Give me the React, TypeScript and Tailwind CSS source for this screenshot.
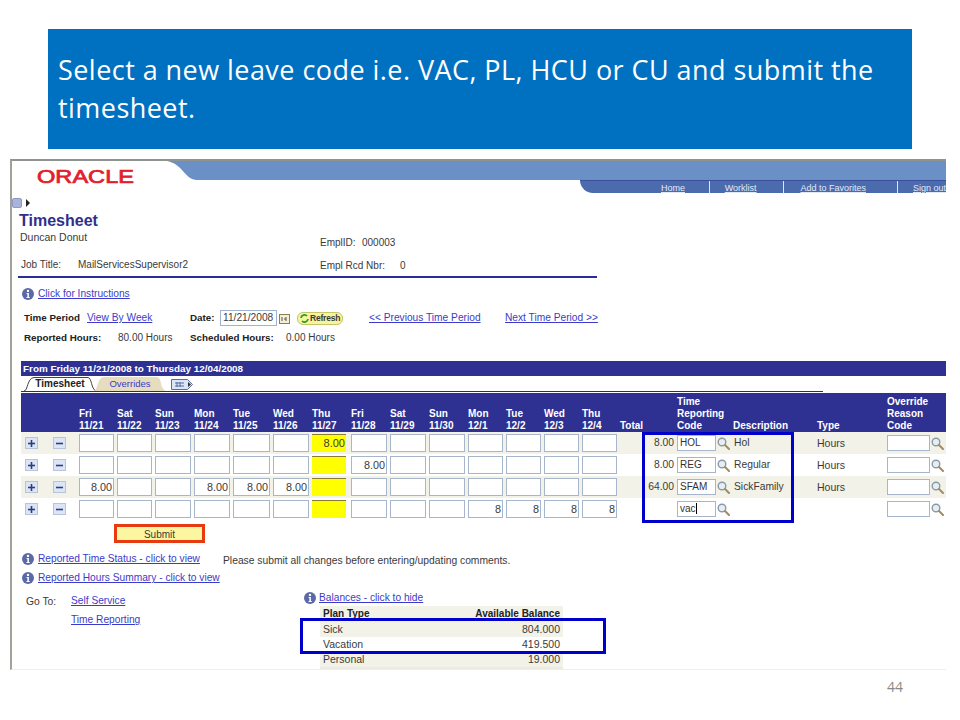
import React from "react";

const gridCols =
  "grid grid-cols-[28px_30px_38px_38px_39px_39px_40px_39px_39px_39px_39px_39px_38px_38px_38px_38px_57px_56px_84px_70px_59px]";

const days = [
  ["Fri", "11/21"], ["Sat", "11/22"], ["Sun", "11/23"], ["Mon", "11/24"], ["Tue", "11/25"], ["Wed", "11/26"], ["Thu", "11/27"],
  ["Fri", "11/28"], ["Sat", "11/29"], ["Sun", "11/30"], ["Mon", "12/1"], ["Tue", "12/2"], ["Wed", "12/3"], ["Thu", "12/4"],
];

const rows = [
  { vals: { 6: "8.00" } as Record<number, string>, total: "8.00", code: "HOL", desc: "Hol", type: "Hours" },
  { vals: { 7: "8.00" } as Record<number, string>, total: "8.00", code: "REG", desc: "Regular", type: "Hours" },
  { vals: { 0: "8.00", 3: "8.00", 4: "8.00", 5: "8.00" } as Record<number, string>, total: "64.00", code: "SFAM", desc: "SickFamily", type: "Hours" },
  { vals: { 10: "8", 11: "8", 12: "8", 13: "8" } as Record<number, string>, total: "", code: "vac", desc: "", type: "" },
];

function Info() {
  return (
    <svg width="12" height="12" viewBox="0 0 12 12" className="shrink-0">
      <circle cx="6" cy="6" r="6" fill="#5b6aa6" />
      <circle cx="6" cy="2.9" r="1.2" fill="#fff" />
      <path d="M4.6 5h2.3v4h.8v1H4.5V9h.9V6h-.8z" fill="#fff" />
    </svg>
  );
}

function Glass() {
  return (
    <svg width="13" height="13" viewBox="0 0 13 13" className="shrink-0">
      <circle cx="5" cy="5" r="3.8" fill="#e6eef5" stroke="#8b9aa8" strokeWidth="1.4" />
      <path d="M8 8l4 4" stroke="#a08c60" strokeWidth="2" strokeLinecap="round" />
    </svg>
  );
}

function Box({ plus }: { plus?: boolean }) {
  return (
    <div className="w-[13px] h-[12px] bg-[#dbe5f5] border border-[#b8c4da] flex items-center justify-center">
      <svg width="9" height="9" viewBox="0 0 9 9">
        <path d="M1 4.5h7" stroke="#2e3d80" strokeWidth="1.6" />
        {plus && <path d="M4.5 1v7" stroke="#2e3d80" strokeWidth="1.6" />}
      </svg>
    </div>
  );
}

function Link({ children, className = "" }: { children: React.ReactNode; className?: string }) {
  return <span className={"text-[#3b3bc9] underline text-[10.2px] leading-[14px] whitespace-nowrap " + className}>{children}</span>;
}

export default function App() {
  return (
    <div className="w-[960px] h-[720px] bg-white overflow-hidden font-['Liberation_Sans',Arial,sans-serif] text-[#3a3a3a] text-[10.5px] leading-[14px]">
      <div className="pt-[29px] pl-[48px]">
        <div className="w-[864px] h-[120px] bg-[#0070c0] pt-[22px] pl-[10px] pr-[20px] text-white font-['Open_Sans',sans-serif] text-[27px] tracking-[0.45px] leading-[38px]">
          Select a new leave code i.e. VAC, PL, HCU or CU and submit the timesheet.
        </div>
      </div>

      <div className="relative ml-[10px] mt-[10px] w-[936px] h-[511px] overflow-hidden border-l-2 border-t-2 border-b border-l-[#a2a29a] border-t-[#8f9490] border-b-[#eeeeee]">
        {/* header */}
        <div className="flex h-[32px]">
          <div className="w-[155px] pl-[25px] pt-[7px]">
            <svg width="98" height="18" viewBox="0 0 98 18" className="overflow-visible">
              <text x="0" y="14.5" textLength="97" lengthAdjust="spacingAndGlyphs" fontFamily="Liberation Sans, Arial, sans-serif" fontWeight="400" fontSize="17.5" fill="#e2202c" stroke="#e2202c" strokeWidth="0.7">
                ORACLE
              </text>
            </svg>
          </div>
          <svg width="30" height="19" viewBox="0 0 30 19" className="shrink-0">
            <path d="M0 0H30V19C18 19 16 3 0 0Z" fill="#6b90c6" />
          </svg>
          <div className="flex-1 flex flex-col">
            <div className="h-[19px] bg-[#6b90c6]" />
            <div className="flex justify-end">
              <div className="w-[366px] h-[13px] bg-[#4a6bae] border-t border-t-[#3c4f9a] rounded-bl-[18px] flex text-[#e3e9f4] text-[9px] leading-[15px] underline whitespace-nowrap">
                <div className="w-[130px] pl-[81px] border-r border-r-[#dfe6f2]">Home</div>
                <div className="w-[75px] pl-[15px] border-r border-r-[#dfe6f2]">Worklist</div>
                <div className="w-[114px] pl-[16px] border-r border-r-[#dfe6f2]">Add to Favorites</div>
                <div className="pl-[15px]">Sign out</div>
              </div>
            </div>
          </div>
        </div>

        {/* menu toggle */}
        <div className="mt-[4px] h-[12px] flex items-center">
          <div className="w-[10px] h-[10px] rounded-[2px] bg-[#a9b4dc] border border-[#8e9ac6]" />
          <svg width="6" height="8" viewBox="0 0 6 8" className="ml-[3px]">
            <path d="M1 0l4 4-4 4z" fill="#222" />
          </svg>
        </div>

        <div className="mt-[3px] ml-[7px] h-[18px] text-[16px] leading-[18px] font-bold text-[#2f2f8c]">Timesheet</div>

        {/* identity */}
        <div className="flex h-[46px]">
          <div className="w-[308px] pl-[8px]">
            <div className="h-[14px]">Duncan Donut</div>
            <div className="mt-[14px] flex h-[14px]">
              <div className="w-[58px] pl-[1px] text-[10px]">Job Title:</div>
              <div className="text-[10px]">MailServicesSupervisor2</div>
            </div>
          </div>
          <div className="pt-[6px] text-[10px]">
            <div className="flex h-[14px]">
              <div className="w-[42px]">EmplID:</div>
              <div>000003</div>
            </div>
            <div className="mt-[9px] flex h-[14px]">
              <div className="w-[80px]">Empl Rcd Nbr:</div>
              <div>0</div>
            </div>
          </div>
        </div>
        <div className="ml-[6px] w-[579px] h-[2px] bg-[#2b2b9a]" />

        <div className="mt-[9px] ml-[10px] h-[14px] flex items-center gap-[4px]">
          <Info />
          <Link>Click for Instructions</Link>
        </div>

        {/* time period */}
        <div className="mt-[10px] ml-[12px] h-[14px] flex items-center text-[9.8px]">
          <div className="w-[63px] font-bold text-[#222]">Time Period</div>
          <Link className="w-[103px]">View By Week</Link>
          <div className="w-[30px] font-bold text-[#222]">Date:</div>
          <div className="w-[57px] h-[16px] border border-[#9fb3cf] text-[10.2px] leading-[14px] pl-[2px]">11/21/2008</div>
          <svg width="11" height="11" viewBox="0 0 11 11" className="ml-[2px]">
            <rect x="0.5" y="1.5" width="10" height="9" fill="#f4f0d8" stroke="#8a7d50" />
            <path d="M3 4v4M7 4v4M5 6h2" stroke="#555" />
          </svg>
          <div className="ml-[7px] w-[46px] h-[13px] rounded-[6px] bg-[#f6f59a] border border-[#c5c466] flex items-center pl-[2px] gap-[1px] text-[8.5px] font-bold tracking-[-0.2px]">
            <svg width="9" height="9" viewBox="0 0 9 9" className="shrink-0">
              <path d="M1 4a3.5 3.5 0 0 1 6-2" stroke="#2e9a3a" strokeWidth="1.8" fill="none" />
              <path d="M8 5a3.5 3.5 0 0 1-6 2" stroke="#2e9a3a" strokeWidth="1.8" fill="none" />
            </svg>
            Refresh
          </div>
          <Link className="ml-[26px] w-[136px] text-[9.8px]">{"<< Previous Time Period"}</Link>
          <Link className="text-[9.7px]">{"Next Time Period >>"}</Link>
        </div>
        <div className="mt-[6px] ml-[12px] h-[14px] flex items-center text-[9.8px]">
          <div className="w-[94px] font-bold text-[#222]">Reported Hours:</div>
          <div className="w-[72px] text-[10px]">80.00 Hours</div>
          <div className="w-[96px] font-bold text-[#222]">Scheduled Hours:</div>
          <div className="text-[10px]">0.00 Hours</div>
        </div>

        {/* band */}
        <div className="mt-[16px] ml-[9px] h-[15px] bg-[#2e3192] text-white font-bold text-[9.9px] leading-[15px] pl-[2px]">
          From Friday 11/21/2008 to Thursday 12/04/2008
        </div>

        {/* tabs */}
        <div className="ml-[9px] w-[802px] h-[16px] border-b border-b-[#333333] flex items-end pl-[3px] text-[10px] leading-[14px]">
          <div className="relative w-[72px] h-[14px] text-center font-bold text-[#222]">
            <svg width="72" height="14" viewBox="0 0 72 14" className="absolute left-0 top-0">
              <path d="M0 14C4 14 3 1 10 .5H64C68 1 67 12 72 14" fill="#fff" stroke="#444" />
            </svg>
            <span className="relative">Timesheet</span>
          </div>
          <div className="relative -ml-[2px] w-[72px] h-[14px] text-center text-[#3b3bc9] text-[9.5px]">
            <svg width="72" height="14" viewBox="0 0 72 14" className="absolute left-0 top-0">
              <path d="M0 14C4 14 3 0 10 0H63C68 0 66 12 72 14Z" fill="#e6ddc0" />
            </svg>
            <span className="relative">Overrides</span>
          </div>
          <svg width="22" height="11" viewBox="0 0 22 11" className="ml-[5px] mb-[1px]">
            <path d="M.5.5h16l5 5-5 5H.5z" fill="#dbe5f5" stroke="#5b6aa6" />
            <path d="M4 4h9M4 7h9M6 3v5M9 3v5" stroke="#5b6aa6" />
            <path d="M17 3l3 2.5-3 2.5z" fill="#333" />
          </svg>
        </div>
        <div className="h-[1px]" />

        {/* table header */}
        <div className={gridCols + " ml-[9px] h-[39px] bg-[#2e3192] text-white font-bold text-[10px] leading-[12px] items-end"}>
          <div />
          <div />
          {days.map(([d, n], i) => (
            <div key={i}>
              <div>{d}</div>
              <div>{n}</div>
            </div>
          ))}
          <div>Total</div>
          <div>
            <div>Time</div>
            <div>Reporting</div>
            <div>Code</div>
          </div>
          <div>Description</div>
          <div>Type</div>
          <div>
            <div>Override</div>
            <div>Reason</div>
            <div>Code</div>
          </div>
        </div>

        {/* table rows */}
        {rows.map((r, ri) => (
          <div key={ri} className={gridCols + " ml-[9px] h-[22px] items-center " + (ri % 2 === 0 ? "bg-[#f2f2e8]" : "bg-white")}>
            <div className="pl-[4px]">
              <Box plus />
            </div>
            <div className="pl-[4px]">
              <Box />
            </div>
            {days.map((_, i) =>
              i === 6 ? (
                <div key={i} className="h-[18px] mr-[5px] bg-[#ffff00] border-t border-t-[#8a7a30] text-right pr-[1px] text-[11px] leading-[17px]">
                  {r.vals[i]}
                </div>
              ) : (
                <div key={i} className="h-[18px] mr-[3px] bg-white border border-[#a8b6cc] text-right pr-[1px] text-[10.8px] leading-[16px]">
                  {r.vals[i]}
                </div>
              )
            )}
            <div className="text-right pr-[3px] text-[10.3px]">{r.total}</div>
            <div className="flex items-center gap-[1px]">
              <div className="w-[39px] h-[16px] bg-white border border-[#a8b6cc] pl-[2px] text-[10px] leading-[14px] text-[#333]">
                {r.code}
                {ri === 3 && <span className="inline-block w-px h-[11px] bg-black align-[-2px]" />}
              </div>
              <Glass />
            </div>
            <div className="pl-[1px] text-[10.3px]">{r.desc}</div>
            <div className="text-[10.5px]">{r.type}</div>
            <div className="flex items-center gap-[1px]">
              <div className="w-[43px] h-[16px] bg-white border border-[#a8b6cc]" />
              <Glass />
            </div>
          </div>
        ))}

        {/* submit */}
        <div className="mt-[4px] ml-[102px] w-[91px] h-[19px] border-[3px] border-[#e83a10] bg-[#fdf6a0] text-center text-[10px] leading-[15px]">Submit</div>

        <div className="mt-[9px] ml-[10px] h-[14px] flex items-center">
          <Info />
          <Link className="ml-[4px] w-[185px]">Reported Time Status - click to view</Link>
          <div className="mt-[4px] text-[10.3px]">Please submit all changes before entering/updating comments.</div>
        </div>
        <div className="mt-[5px] ml-[10px] h-[14px] flex items-center">
          <Info />
          <Link className="ml-[4px]">Reported Hours Summary - click to view</Link>
        </div>

        {/* bottom */}
        <div className="flex">
          <div className="w-[292px] pl-[14px] pt-[9px] flex">
            <div className="w-[45px] mt-[1px] text-[10.3px]">Go To:</div>
            <div className="flex flex-col gap-[5px]">
              <Link>Self Service</Link>
              <Link>Time Reporting</Link>
            </div>
          </div>
          <div className="pt-[6px]">
            <div className="h-[14px] flex items-center gap-[3px]">
              <Info />
              <Link>Balances - click to hide</Link>
            </div>
            <div className="mt-[1px] ml-[16px] w-[243px] bg-[#f2f2e8] border-b-2 border-b-[#ecece0] text-[10.5px] leading-[15px]">
              <div className="flex justify-between px-[3px] font-bold text-[#222] text-[10px] leading-[16px]">
                <span>Plan Type</span>
                <span>Available Balance</span>
              </div>
              <div className="flex justify-between px-[3px]">
                <span>Sick</span>
                <span>804.000</span>
              </div>
              <div className="flex justify-between px-[3px] bg-white">
                <span>Vacation</span>
                <span>419.500</span>
              </div>
              <div className="flex justify-between px-[3px]">
                <span>Personal</span>
                <span>19.000</span>
              </div>
            </div>
          </div>
        </div>

        {/* annotation boxes drawn over the screenshot */}
        <div className="absolute left-[630px] top-[271px] w-[152px] h-[91px] border-[3px] border-[#0000cc]" />
        <div className="absolute left-[288px] top-[457px] w-[306px] h-[36px] border-[3px] border-[#0000cc]" />
      </div>

      <div className="mt-[9px] pr-[57px] text-right font-['Open_Sans',sans-serif] text-[14px] leading-[16px] text-[#8a8a8a]">44</div>
    </div>
  );
}
